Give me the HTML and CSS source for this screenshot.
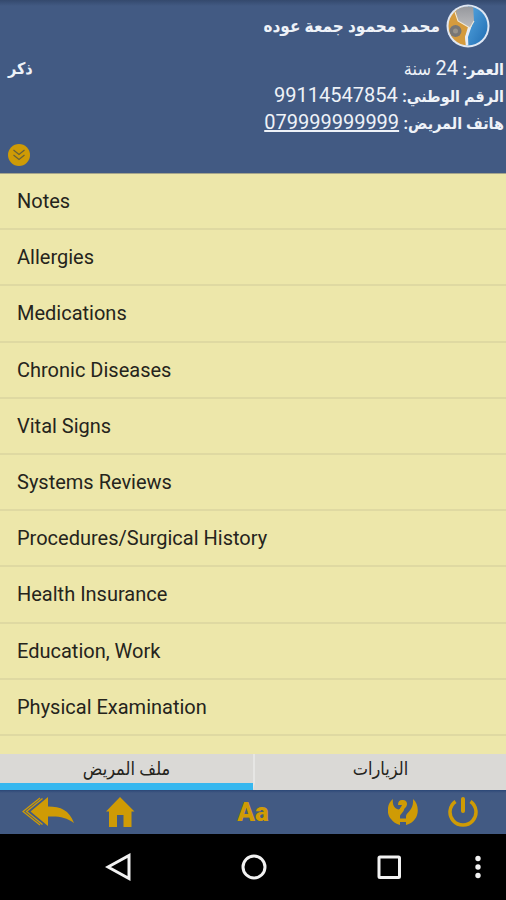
FILE: index.html
```html
<!DOCTYPE html>
<html lang="ar">
<head>
<meta charset="utf-8">
<meta name="viewport" content="width=device-width, initial-scale=1">
<title>ملف المريض</title>
<link rel="stylesheet" href="styles.css">
</head>
<body>
<header class="patient" dir="rtl">
  <div class="identity">
    <svg class="avatar" viewBox="0 0 44 44" aria-hidden="true">
      <defs>
        <linearGradient id="blue" x1="0" y1="0" x2="1" y2="1">
          <stop offset="0" stop-color="#58a9e2"/>
          <stop offset="1" stop-color="#1b67ae"/>
        </linearGradient>
        <linearGradient id="grey" x1="0" y1="0" x2="0" y2="1">
          <stop offset="0" stop-color="#929499"/>
          <stop offset="1" stop-color="#bcbcbe"/>
        </linearGradient>
        <clipPath id="disc"><circle cx="22" cy="22" r="19.500"/></clipPath>
      </defs>
      <circle cx="22" cy="22" r="21.5" fill="#dfe7f3"/>
      <g clip-path="url(#disc)">
        <path fill="url(#blue)" d="M22 0H44V44H21L22 33Z"/>
        <path fill="#d59b3d" d="M0 0H14L24 23L19 33L21 44H0Z"/>
        <path fill="#e7edf6" d="M22 23L26 21L22 33L22.500 44H20L19 33Z"/>
        <path fill="url(#grey)" d="M10 7L16 0H27L28 17L24 24L12 17Z"/>
        <path fill="none" stroke="#f1ead9" stroke-width="1.1" d="M9 8L12 17L24 24L28 17"/>
        <circle cx="9.5" cy="27" r="6" fill="#777675"/>
        <circle cx="9.5" cy="27" r="2.5" fill="#98938b"/>
      </g>
    </svg>
    <h1 class="name">محمد محمود جمعة عوده</h1>
  </div>
  <div class="details">
    <div class="facts">
      <p class="fact"><b>العمر:</b> <span class="figure">24</span> سنة</p>
      <p class="fact"><b>الرقم الوطني:</b> <span class="figure">99114547854</span></p>
      <p class="fact"><b>هاتف المريض:</b> <a class="figure" href="tel:079999999999">079999999999</a></p>
    </div>
    <p class="gender">ذكر</p>
  </div>
  <button class="expand" type="button" aria-label="المزيد">
    <svg viewBox="0 0 22 22" aria-hidden="true">
      <circle cx="11" cy="11" r="11" fill="#cf9b05"/>
      <path fill="none" stroke="#66603a" stroke-width="1.2" d="M5.5 6L11 10.5L16.5 6M5.5 11L11 15.5L16.5 11"/>
    </svg>
  </button>
</header>

<main class="sections">
  <ul class="list" lang="en">
    <li><a href="#notes">Notes</a></li>
    <li><a href="#allergies">Allergies</a></li>
    <li><a href="#medications">Medications</a></li>
    <li><a href="#chronic">Chronic Diseases</a></li>
    <li><a href="#vitals">Vital Signs</a></li>
    <li><a href="#reviews">Systems Reviews</a></li>
    <li><a href="#procedures">Procedures/Surgical History</a></li>
    <li><a href="#insurance">Health Insurance</a></li>
    <li><a href="#education">Education, Work</a></li>
    <li><a href="#examination">Physical Examination</a></li>
  </ul>
</main>

<nav class="tabs">
  <button class="tab selected" type="button">ملف المريض</button>
  <button class="tab" type="button">الزيارات</button>
</nav>

<div class="toolbar">
  <div class="group">
    <button type="button" aria-label="رجوع">
      <svg class="back" viewBox="0 0 52 30" aria-hidden="true">
        <path fill="#cf9b05" d="M8.500 14.500L26 0V9.500C39 9.500 47 13 52 26C44 20 37 19 26 19.500V29Z"/>
        <path fill="none" stroke="#cf9b05" stroke-width="1.300" d="M18 1L1 14.500L18 28M20.500 1.500L4.500 14.500L20.500 27.500"/>
      </svg>
    </button>
    <button type="button" aria-label="الرئيسية">
      <svg class="icon" viewBox="0 0 30 30" aria-hidden="true">
        <path fill="#cf9b05" d="M14 0L28.500 14.500H25.500V30H17.500V18H11V30H3V14.500H0Z"/>
      </svg>
    </button>
  </div>
  <button class="text-size" type="button">Aa</button>
  <div class="group end">
    <button type="button" aria-label="مساعدة">
      <svg class="icon" viewBox="0 0 30 30" aria-hidden="true">
        <path fill="#cf9b05" d="M5 2C-1 6-2 17 3 22C5 25 8 27 12 28V19C13 16 17 14 16 11L14 10C12 12 11 13 9 12C6 11 4 7 5 2Z"/>
        <path fill="#cf9b05" d="M25 2C31 7 31 17 27 22C25 25 22 27 18 28V19C19 15 26 13 25 2Z"/>
        <path fill="#cf9b05" d="M10 8C10 4 12 2.500 15 3C19 3 20 7 18 10C16 12 14 14 13 17H10C10 13 13 11 14 8Z"/>
        <path fill="#cf9b05" d="M10 21.500H19V25H10Z"/>
      </svg>
    </button>
    <button type="button" aria-label="خروج">
      <svg class="icon" viewBox="0 0 30 30" aria-hidden="true">
        <path fill="none" stroke="#cf9b05" stroke-width="3.500" d="M7.500 4.500A13 13 0 1 0 22.500 4.500"/>
        <path stroke="#cf9b05" stroke-width="4" stroke-linecap="round" d="M15 2V14"/>
      </svg>
    </button>
  </div>
</div>

<nav class="system">
  <button class="sys-back" type="button" aria-label="Back">
    <svg viewBox="0 0 28 28" aria-hidden="true"><path d="M24 2.500V25.500L3 14Z"/></svg>
  </button>
  <button type="button" aria-label="Home">
    <svg viewBox="0 0 28 28" aria-hidden="true"><circle cx="14" cy="14" r="11"/></svg>
  </button>
  <button type="button" aria-label="Recent apps">
    <svg viewBox="0 0 28 28" aria-hidden="true"><rect x="4" y="4" width="20.500" height="20.500" rx="1"/></svg>
  </button>
  <button class="sys-more" type="button" aria-label="More">
    <svg class="dots" viewBox="0 0 28 28" aria-hidden="true"><circle cx="14" cy="5.500" r="2.700"/><circle cx="14" cy="14" r="2.700"/><circle cx="14" cy="22.500" r="2.700"/></svg>
  </button>
</nav>
</body>
</html>
```
FILE: styles.css
```css
* { box-sizing: border-box; }

body {
  margin: 0;
  min-height: 100vh;
  display: flex;
  flex-direction: column;
  background: #000;
  color: #25241c;
  font-family: Roboto, "DejaVu Sans Condensed", "DejaVu Sans", sans-serif;
  font-size: 20px;
}

h1, p, ul { margin: 0; padding: 0; }

button {
  display: flex;
  align-items: center;
  justify-content: center;
  margin: 0;
  padding: 0;
  border: 0;
  background: none;
  color: inherit;
  font: inherit;
}

svg { display: block; }

.patient {
  display: flex;
  flex-direction: column;
  padding: 4px 2px 7px 8px;
  background: linear-gradient(#34496d, #425a83 6px);
  color: #eef2f8;
  font-size: 18px;
}

.identity {
  display: flex;
  align-items: center;
  gap: 6px;
  padding-right: 14px;
}

.avatar { width: 44px; height: 44px; }

.name { font-size: 17px; font-weight: 700; }

.details {
  display: flex;
  justify-content: space-between;
  padding-top: 7px;
  line-height: 27px;
}

.fact { height: 27px; }

.fact b, .gender { font-size: 16px; font-weight: 700; }

.figure { font-size: 20px; color: inherit; }

.expand { align-self: flex-end; margin-top: 8px; }
.expand svg { width: 22px; height: 22px; }

.sections {
  flex: 1;
  display: flex;
  padding-bottom: 18px;
  background: #ede7aa;
  border-top: 1px solid #a5a58c;
}

.list {
  flex: 1;
  display: grid;
  grid-auto-rows: 1fr;
  list-style: none;
}

.list li { display: flex; border-bottom: 2px solid #dfd9a2; }

.list a {
  flex: 1;
  display: flex;
  align-items: center;
  min-height: 48px;
  padding: 0 17px;
  color: inherit;
  text-decoration: none;
}

.tabs {
  display: grid;
  grid-template-columns: 1fr 1fr;
  background: #dad9d6;
}

.tab {
  height: 36px;
  border-bottom: 7px solid transparent;
  font-size: 18px;
}

.tab.selected { border-bottom-color: #36b7ef; }
.tab + .tab { border-left: 2px solid #e6e6e4; }

.toolbar {
  display: grid;
  grid-template-columns: 1fr auto 1fr;
  align-items: center;
  height: 44px;
  padding: 0 22px;
  background: linear-gradient(#2b4777, #425a83 3px);
  color: #cf9b05;
}

.group { display: flex; gap: 32px; }
.group.end { justify-content: flex-end; gap: 30px; padding-right: 6px; }

.back { width: 52px; height: 30px; }
.icon { width: 30px; height: 30px; }

.text-size { font-size: 26px; font-weight: 900; }

.system {
  display: grid;
  grid-template-columns: 52px 1fr 1fr 1fr 50px;
  height: 66px;
}

.system svg {
  width: 28px;
  height: 28px;
  fill: none;
  stroke: #f2f2f2;
  stroke-width: 3;
}

.system .dots { fill: #f2f2f2; stroke: none; }
.sys-back { grid-column: 2; }
.sys-more { padding-right: 6px; }
```
